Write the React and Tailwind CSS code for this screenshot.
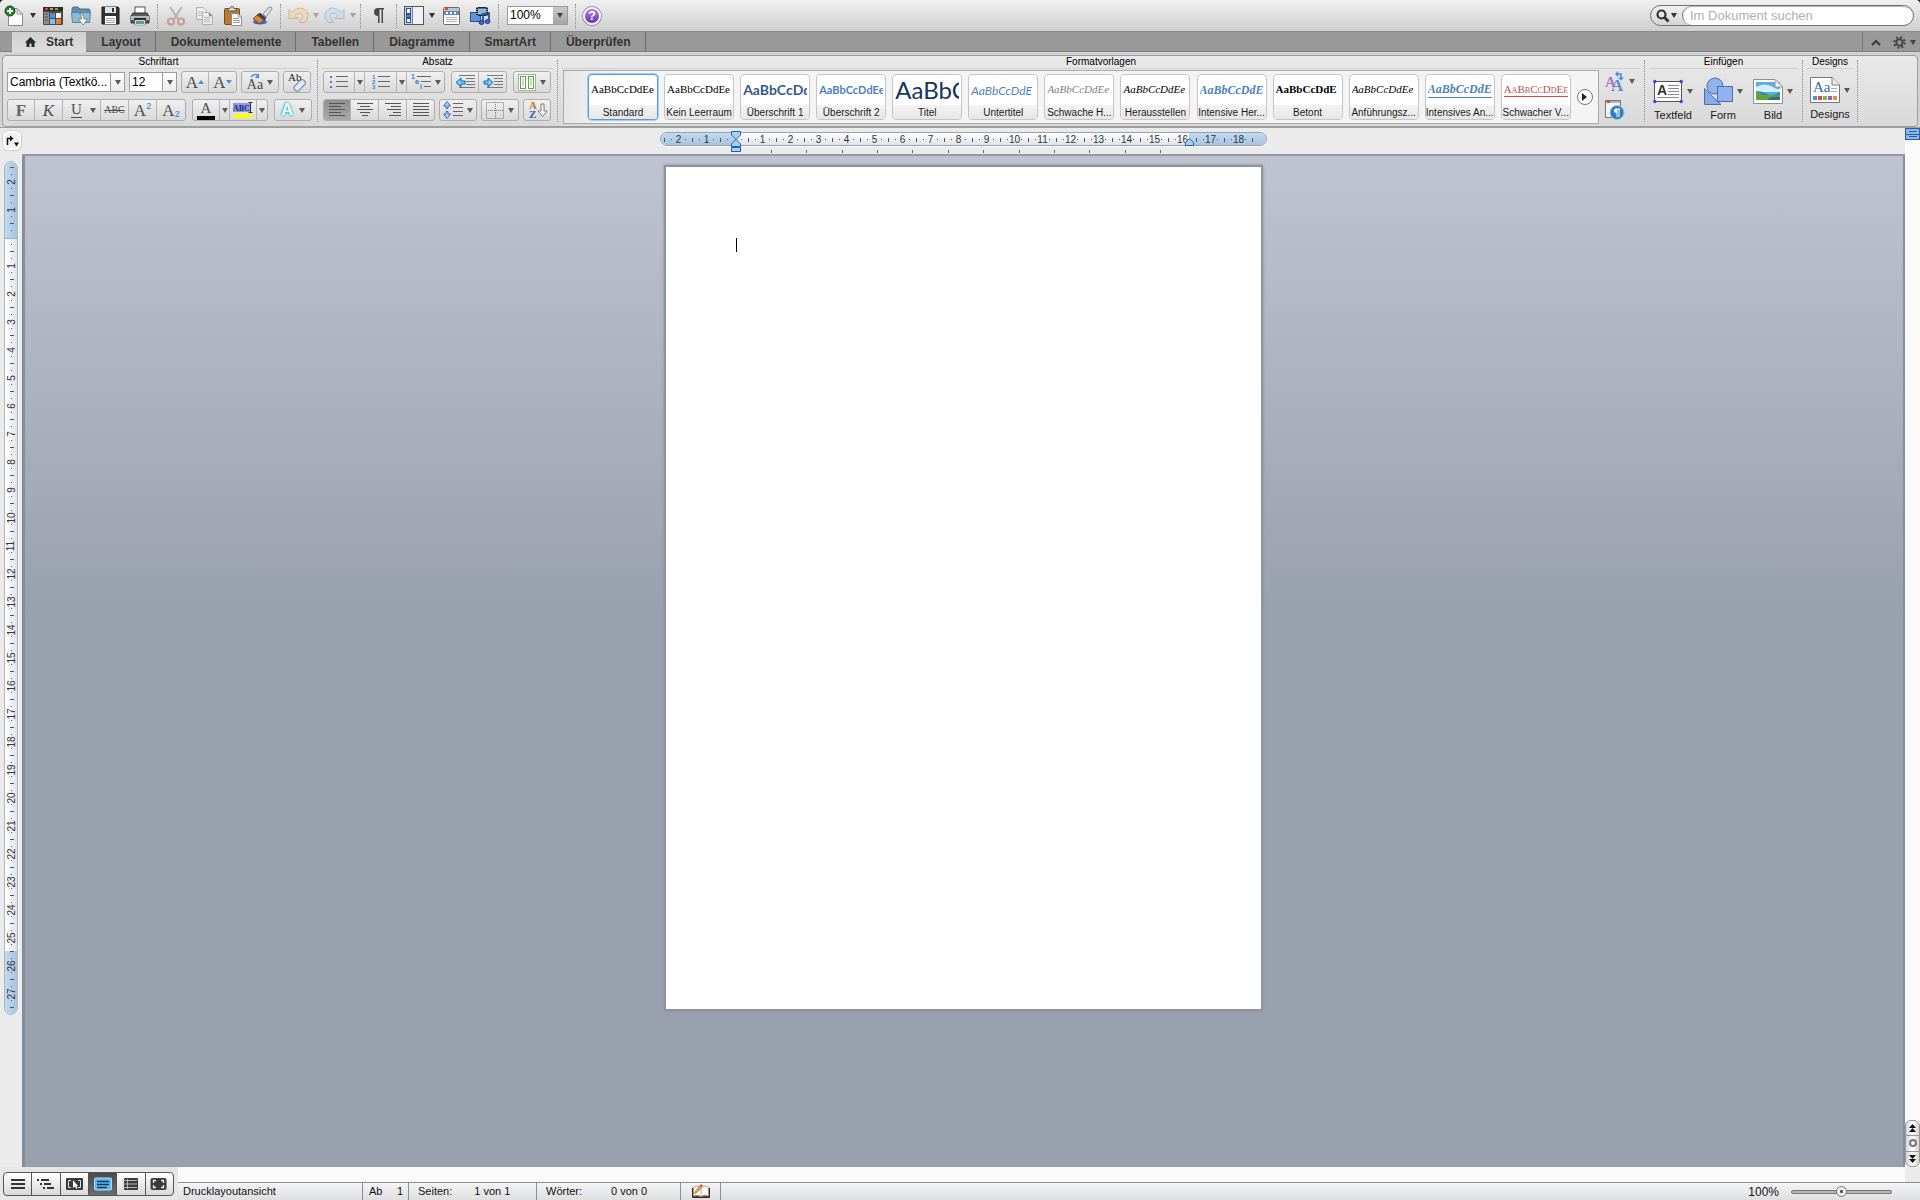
import { useState } from "react"

const styles = [
    { name: "Standard", sample: "AaBbCcDdEe", look: "font-['Liberation_Serif',serif] text-[11px] text-black" },
    { name: "Kein Leerraum", sample: "AaBbCcDdEe", look: "font-['Liberation_Serif',serif] text-[11px] text-black" },
    { name: "Überschrift 1", sample: "AaBbCcDd", look: "font-[Lato,sans-serif] font-bold text-[14px] text-[#345a8a]" },
    { name: "Überschrift 2", sample: "AaBbCcDdEe", look: "font-[Lato,sans-serif] font-bold text-[11px] text-[#4f81bd]" },
    { name: "Titel", sample: "AaBbC", look: "font-[Lato,sans-serif] text-[24px] text-[#17365d]" },
    { name: "Untertitel", sample: "AaBbCcDdE", look: "font-[Lato,sans-serif] italic text-[12px] text-[#4f81bd]" },
    { name: "Schwache H...", sample: "AaBbCcDdEe", look: "font-['Liberation_Serif',serif] italic text-[11px] text-[#808080]" },
    { name: "Herausstellen", sample: "AaBbCcDdEe", look: "font-['Liberation_Serif',serif] italic text-[11px] text-black" },
    { name: "Intensive Her...", sample: "AaBbCcDdE", look: "font-['Liberation_Serif',serif] italic font-bold text-[12px] text-[#4f81bd]" },
    { name: "Betont", sample: "AaBbCcDdE", look: "font-['Liberation_Serif',serif] font-bold text-[11px] text-black" },
    { name: "Anführungsz...", sample: "AaBbCcDdEe", look: "font-['Liberation_Serif',serif] italic text-[11px] text-black" },
    { name: "Intensives An...", sample: "AaBbCcDdE", look: "font-['Liberation_Serif',serif] italic font-bold text-[12px] text-[#4f81bd] border-b border-[#4f81bd]" },
    { name: "Schwacher V...", sample: "AaBbCcDdEe", look: "font-['Liberation_Serif',serif] [font-variant:small-caps] text-[11px] text-[#c0504d] border-b border-[#c0504d]" },
]

const tabs = ["Layout", "Dokumentelemente", "Tabellen", "Diagramme", "SmartArt", "Überprüfen"]

const range = (from, to) => Array.from({ length: to - from + 1 }, (_, i) => from + i)

function Caret({ className = "text-[#5a5a5a]" }) {
    return (
        <svg className={`shrink-0 ${className}`} width="6" height="5" viewBox="0 0 6 5">
            <path d="M0 0H6L3 5Z" fill="currentColor" />
        </svg>
    )
}

function Tool({ label, className = "w-[29px]", children }) {
    return (
        <button aria-label={label} title={label} className={`flex h-full shrink-0 items-center justify-center ${className}`}>
            {children}
        </button>
    )
}

function ToolSeparator() {
    return (
        <div className="flex h-6 w-[7px] shrink-0 justify-center">
            <div className="border-l border-dotted border-[#8c8c8c]" />
        </div>
    )
}

/* ---------- standard toolbar icons ---------- */

function NewIcon() {
    return (
        <svg width="20" height="22" viewBox="0 0 20 22">
            <path d="M4.500 3.500H13L18.500 9V20.500H4.500Z" fill="#fff" stroke="#8a8a8a" />
            <path d="M13 3.500V9H18.500Z" fill="#e4e4e4" stroke="#9a9a9a" />
            <circle cx="6" cy="6" r="5" fill="#2c7a2c" stroke="#175217" />
            <path d="M6 3V9M3 6H9" stroke="#fff" strokeWidth="2" />
        </svg>
    )
}

function GalleryIcon() {
    return (
        <svg width="20" height="20" viewBox="0 0 20 20">
            <rect x="0" y="1" width="20" height="18" rx="1" fill="#4a4a4a" />
            <rect x="0" y="1" width="20" height="4" fill="#2e2e2e" />
            <rect x="2" y="2" width="3" height="2" fill="#e0432e" />
            <rect x="7" y="2" width="3" height="2" fill="#f08c2a" />
            <rect x="12" y="2" width="3" height="2" fill="#58b848" />
            <rect x="1" y="6" width="5" height="12" fill="#8d8d8d" />
            <path d="M2 8H5M2 11H5M2 14H5" stroke="#555" />
            <rect x="7" y="7" width="5" height="5" fill="#4f8fe0" />
            <rect x="13" y="7" width="5" height="5" fill="#f5f5f5" />
            <rect x="7" y="13" width="5" height="5" fill="#7cc1f2" />
            <rect x="13" y="13" width="5" height="5" fill="#ef7b2b" />
        </svg>
    )
}

function OpenIcon() {
    return (
        <svg width="21" height="20" viewBox="0 0 21 20">
            <path d="M1 3Q1 1 3 1H7L9 3H18Q19 3 19 5V7H1Z" fill="#5d8fae" stroke="#48708b" />
            <path d="M0.500 6.500H19.500L18.500 16.500H1.500Z" fill="#8bb9d6" stroke="#5586a4" />
            <path d="M8 7Q13 8 13 13H16.500L12 19L7.500 13H10.500Q11 9 8 7Z" fill="#fff" stroke="#777" strokeWidth="0.800" />
        </svg>
    )
}

function SaveIcon() {
    return (
        <svg width="19" height="19" viewBox="0 0 19 19">
            <path d="M1 1H17L18 2V18H1Z" fill="#2f3338" stroke="#1b1b1b" />
            <rect x="4" y="1" width="11" height="6" fill="#dfe5ea" />
            <rect x="11" y="2" width="2" height="4" fill="#2f3338" />
            <rect x="4" y="10" width="11" height="8" fill="#fff" />
            <path d="M5 12.500H14M5 14.500H14M5 16.500H14" stroke="#a5a5a5" />
        </svg>
    )
}

function PrintIcon() {
    return (
        <svg width="20" height="20" viewBox="0 0 20 20">
            <rect x="5" y="1" width="10" height="7" fill="#fff" stroke="#555" />
            <path d="M3 7H17L19 10V17H1V10Z" fill="#5b5b5b" stroke="#333" />
            <rect x="1" y="10" width="18" height="4" fill="#b9b9b9" />
            <rect x="4" y="12" width="12" height="2" fill="#222" />
            <rect x="5" y="14" width="10" height="5" fill="#fff" stroke="#777" strokeWidth="0.600" />
            <rect x="6" y="15" width="8" height="3" fill="#4a93d9" />
            <path d="M8 18L11 15.500L14 18Z" fill="#67ad4a" />
        </svg>
    )
}

function CutIcon() {
    return (
        <svg width="20" height="20" viewBox="0 0 20 20" fill="none" opacity="0.550">
            <path d="M4 1L12 13M16 1L8 13" stroke="#8c8c8c" strokeWidth="2" />
            <circle cx="5" cy="15.500" r="3" stroke="#c8685c" strokeWidth="2" />
            <circle cx="15" cy="15.500" r="3" stroke="#c8685c" strokeWidth="2" />
        </svg>
    )
}

function CopyIcon() {
    return (
        <svg width="19" height="20" viewBox="0 0 19 20" opacity="0.550">
            <path d="M1.500 1.500H8L11.500 5V13.500H1.500Z" fill="#f5f5f5" stroke="#8d8d8d" />
            <path d="M3 5.500H8M3 7.500H9M3 9.500H9" stroke="#a5a5a5" />
            <path d="M7.500 6.500H14L17.500 10V18.500H7.500Z" fill="#f8f8f8" stroke="#8d8d8d" />
            <path d="M14 6.500V10H17.500M9 11.500H15M9 13.500H15M9 15.500H15" stroke="#9b9b9b" />
        </svg>
    )
}

function PasteIcon() {
    return (
        <svg width="19" height="20" viewBox="0 0 19 20">
            <rect x="0.500" y="2.500" width="15" height="16" rx="1" fill="#b97a2e" stroke="#7b4b16" />
            <path d="M4 5V2.500H6Q6 0.500 8 0.500T10 2.500H12V5Z" fill="#d7d7d7" stroke="#5c5c5c" />
            <path d="M7.500 7.500H14L17.500 11V19.500H7.500Z" fill="#fff" stroke="#8a8a8a" />
            <path d="M14 7.500V11H17.500M9 12.500H15M9 14.500H16M9 16.500H16" fill="none" stroke="#9a9a9a" />
        </svg>
    )
}

function BrushIcon() {
    return (
        <svg width="21" height="20" viewBox="0 0 21 20">
            <ellipse cx="8" cy="16" rx="7" ry="2.500" fill="#3e62d8" />
            <path d="M11 8L17 1Q20 0 20 3L14 11Z" fill="#d9dde2" stroke="#8c9299" />
            <path d="M8 7L14 12L12 15L5 9Z" fill="#39445a" stroke="#262c3b" strokeWidth="0.600" />
            <path d="M5 9L12 14L8 18L1 13Z" fill="#c9792c" stroke="#7b4111" strokeWidth="0.800" />
            <path d="M3 12L8 16M5 10.500L10 15" stroke="#f2b463" strokeWidth="0.800" />
        </svg>
    )
}

function UndoIcon({ redo }) {
    return (
        <svg width="21" height="17" viewBox="0 0 21 17" className={redo ? "-scale-x-100" : ""} opacity="0.600">
            <path
                d="M1 2.500V11.500H10L7 8.500Q10 5 13.500 6.500Q16.500 9 12 13.500V15.500H17Q20.500 12 20 7.500Q18.500 1.500 12.500 1Q7.500 1 4 5.500Z"
                fill={redo ? "#c2dceb" : "#f3d6a6"}
                stroke={redo ? "#7fa7c0" : "#c9974e"}
            />
        </svg>
    )
}

function SidebarIcon() {
    return (
        <svg width="20" height="20" viewBox="0 0 20 20">
            <rect x="0.500" y="0.500" width="19" height="18" fill="#eef0f6" stroke="#555" />
            <rect x="1" y="1" width="7" height="17" fill="#c5d3ee" />
            <rect x="2.500" y="2.500" width="4" height="5" fill="#fff" stroke="#2d4f9f" />
            <rect x="2.500" y="8.500" width="4" height="3" fill="#5a7fce" stroke="#2d4f9f" />
            <rect x="2.500" y="12.500" width="4" height="4" fill="#fff" stroke="#2d4f9f" />
            <path d="M8.500 1V18" stroke="#7486ad" />
        </svg>
    )
}

function ToolboxIcon() {
    return (
        <svg width="17" height="20" viewBox="0 0 17 20">
            <rect x="0.500" y="1.500" width="16" height="17" rx="1" fill="#fafafa" stroke="#6b6b6b" />
            <rect x="1" y="2" width="15" height="3" fill="#c5c5c5" />
            <rect x="2" y="1" width="3" height="3" fill="#d8442c" />
            <rect x="1" y="5" width="15" height="4" fill="#5e8bb5" />
            <path d="M3 7H5M7 7H9M11 7H13" stroke="#fff" strokeWidth="2" />
            <path d="M3 11.500H14M3 13.500H14M3 15.500H14" stroke="#b5b5b5" />
        </svg>
    )
}

function MediaIcon() {
    return (
        <svg width="21" height="20" viewBox="0 0 21 20">
            <rect x="0.500" y="6.500" width="10" height="9" fill="#5f94dc" stroke="#2c4f8d" />
            <rect x="6" y="1" width="12" height="9" fill="#232323" />
            <rect x="8" y="2.500" width="8" height="6" fill="#84b9e8" />
            <path d="M7 1V10M17 1V10" stroke="#f2f2f2" strokeDasharray="1 1" />
            <path d="M13 16V8L19 7V15" stroke="#2b4e9e" strokeWidth="1.800" fill="none" />
            <ellipse cx="11.500" cy="16.500" rx="2.500" ry="2" fill="#3f6dc4" stroke="#213f84" />
            <ellipse cx="17.500" cy="15.500" rx="2.500" ry="2" fill="#3f6dc4" stroke="#213f84" />
        </svg>
    )
}

function Toolbar() {
    const [zoom, setZoom] = useState("100%")

    return (
        <div className="bg-black">
            <div className="flex h-8 items-center rounded-t-[4px] border-b border-[#8a8a8a] bg-linear-to-b from-[#f0f0f0] to-[#cfcfcf] pr-1.5">
                <Tool label="Neues Dokument" className="w-7"><NewIcon /></Tool>
                <Tool label="Neu, weitere Optionen" className="w-[10px]"><Caret className="text-[#333]" /></Tool>
                <Tool label="Vorlagenkatalog"><GalleryIcon /></Tool>
                <Tool label="Öffnen"><OpenIcon /></Tool>
                <Tool label="Speichern"><SaveIcon /></Tool>
                <Tool label="Drucken"><PrintIcon /></Tool>
                <ToolSeparator />
                <Tool label="Ausschneiden"><CutIcon /></Tool>
                <Tool label="Kopieren"><CopyIcon /></Tool>
                <Tool label="Einsetzen"><PasteIcon /></Tool>
                <Tool label="Format übertragen"><BrushIcon /></Tool>
                <ToolSeparator />
                <Tool label="Rückgängig" className="w-7"><UndoIcon /></Tool>
                <Tool label="Rückgängig, Liste" className="w-2"><Caret className="text-[#a5a5a5]" /></Tool>
                <Tool label="Wiederholen"><UndoIcon redo /></Tool>
                <Tool label="Wiederholen, Liste" className="w-2"><Caret className="text-[#a5a5a5]" /></Tool>
                <ToolSeparator />
                <Tool label="Formatierungszeichen">
                    <svg width="12" height="16" viewBox="0 0 12 16">
                        <path d="M5 0H11V1.500H10V15H8.500V1.500H6.500V15H5V8Q1 8 1 4T5 0Z" fill="#4a4a4a" />
                    </svg>
                </Tool>
                <ToolSeparator />
                <Tool label="Seitenleiste" className="w-7"><SidebarIcon /></Tool>
                <Tool label="Seitenleiste, Optionen" className="w-2"><Caret className="text-[#333]" /></Tool>
                <Tool label="Toolbox" className="w-[30px]"><ToolboxIcon /></Tool>
                <Tool label="Medienbrowser"><MediaIcon /></Tool>
                <ToolSeparator />
                <div className="relative mr-1 ml-[5px] h-[19px] w-[61px] border border-[#9a9a9a] bg-white">
                    <select
                        aria-label="Zoom"
                        className="block h-full w-full appearance-none pl-0.5 text-[12px] leading-[17px] text-black outline-none"
                        value={zoom}
                        onChange={({ target }) => setZoom(target.value)}
                    >
                        <option>100%</option>
                        <option>150%</option>
                        <option>200%</option>
                    </select>
                    <div className="pointer-events-none absolute inset-y-0 right-0 flex w-[14px] items-center justify-center bg-linear-to-b from-[#c9c9c9] to-[#a5a5a5]">
                        <Caret className="text-[#444]" />
                    </div>
                </div>
                <ToolSeparator />
                <Tool label="Hilfe" className="w-[26px]">
                    <span className="flex size-[18px] items-center justify-center rounded-full border-2 border-[#f4f0fa] bg-linear-to-b from-[#a582dd] to-[#6a2fb8] text-[13px] leading-none font-bold text-white shadow-[0_0_0_1px_#8d8d8d]">?</span>
                </Tool>

                <div className="ml-auto flex h-[21px] w-[264px] overflow-hidden rounded-full border border-[#6e6e6e] bg-linear-to-b from-[#f0f0f0] to-[#d5d5d5]">
                    <button aria-label="Suchoptionen" className="flex w-[31px] items-center justify-center gap-px">
                        <svg width="14" height="14" viewBox="0 0 14 14" fill="none" stroke="#333">
                            <circle cx="5.500" cy="5.500" r="4" strokeWidth="2.200" />
                            <path d="M8.500 8.500L12.500 12.500" strokeWidth="2.800" />
                        </svg>
                        <Caret className="text-[#333]" />
                    </button>
                    <input
                        aria-label="Im Dokument suchen"
                        placeholder="Im Dokument suchen"
                        className="min-w-0 flex-1 rounded-full border-l border-[#7d7d7d] bg-white pl-[7px] text-[13px] shadow-[inset_0_1px_1px_#b5b5b5] outline-none placeholder:text-[#b0b0b0]"
                    />
                </div>
            </div>
        </div>
    )
}

function TabBar() {
    return (
        <nav className="flex h-5 items-stretch bg-[#999] text-[12px] font-bold text-[#333] shadow-[inset_0_-1px_0_#808080]">
            <button className="ml-3 flex items-center gap-2.5 bg-linear-to-b from-[#cfcfcf] to-[#dedede] px-[13px] text-[#333]">
                <svg width="11" height="10" viewBox="0 0 11 10">
                    <path d="M5.500 0L11 5.500H9.500V10H6.500V6.500H4.500V10H1.500V5.500H0L5.500 0Z" fill="#2a2a2a" />
                </svg>
                Start
            </button>
            {tabs.map((tab) => (
                <button key={tab} className="border-r border-[#6e6e6e] pr-3.5 pl-[15px] shadow-[inset_0_-1px_0_#808080]">{tab}</button>
            ))}
            <div className="ml-auto flex items-center border-l border-[#777]">
                <button aria-label="Menüband ausblenden" className="flex w-[26px] justify-center">
                    <svg width="10" height="7" viewBox="0 0 10 7" fill="none" stroke="#3a3a3a" strokeWidth="2">
                        <path d="M1 6L5 2L9 6" />
                    </svg>
                </button>
                <button aria-label="Einstellungen" className="flex items-center gap-1 pr-1 pl-1">
                    <svg width="13" height="13" viewBox="0 0 13 13" fill="none" stroke="#444">
                        <circle cx="6.500" cy="6.500" r="3.200" strokeWidth="2" />
                        <circle cx="6.500" cy="6.500" r="5.300" strokeWidth="2" strokeDasharray="2 2.160" />
                    </svg>
                    <Caret className="text-[#444]" />
                </button>
            </div>
        </nav>
    )
}

/* ---------- ribbon ---------- */

function Group({ title, className = "", children }) {
    return (
        <section className={`flex flex-col ${className}`}>
            <h2 className="mx-1 h-[13px] border-b border-[#d0d0d0] text-center text-[10px] leading-3 text-black">{title}</h2>
            {children}
        </section>
    )
}

function GroupSeparator() {
    return <div className="my-1 border-l border-dotted border-[#8c8c8c]" />
}

function Buttons({ children }) {
    return (
        <div className="flex h-[22px] divide-x divide-[#b5b5b5] overflow-hidden rounded-[3px] border border-[#adadad] bg-linear-to-b from-[#f0f0f0] to-[#d9d9d9]">
            {children}
        </div>
    )
}

function Btn({ label, className = "w-7", children }) {
    return (
        <button aria-label={label} title={label} className={`flex items-center justify-center text-[#4d4d4d] ${className}`}>
            {children}
        </button>
    )
}

function ComboBox({ label, options, className }) {
    const [value, setValue] = useState(options[0])

    return (
        <div className={`relative h-5 border border-[#9d9d9d] bg-white ${className}`}>
            <select
                aria-label={label}
                className="block h-full w-full appearance-none pr-3.5 pl-0.5 text-[12px] leading-[18px] text-black outline-none"
                value={value}
                onChange={({ target }) => setValue(target.value)}
            >
                {options.map((o) => <option key={o}>{o}</option>)}
            </select>
            <div className="pointer-events-none absolute inset-y-0 right-0 flex w-[14px] items-center justify-center border-l border-[#9d9d9d] bg-linear-to-b from-white to-[#ececec]">
                <Caret />
            </div>
        </div>
    )
}

const glyph = "font-['Liberation_Serif',serif] leading-none"

function FontGroup() {
    return (
        <Group title="Schriftart" className="w-[309px]">
            <div className="flex flex-col gap-1.5 pt-0.5 pl-[3px]">
                <div className="flex h-[22px] items-center gap-1">
                    <ComboBox label="Schriftart" options={["Cambria (Textkö...", "Calibri", "Arial"]} className="w-[118px]" />
                    <ComboBox label="Schriftgrad" options={["12", "14", "18"]} className="w-12" />
                    <Buttons>
                        <Btn label="Schrift vergrößern" className="w-[27px]">
                            <span className={`${glyph} text-[17px]`}>A</span>
                            <svg width="6" height="4" viewBox="0 0 6 4"><path d="M0 4H6L3 0Z" fill="#4a90d9" /></svg>
                        </Btn>
                        <Btn label="Schrift verkleinern" className="w-[27px]">
                            <span className={`${glyph} text-[17px]`}>A</span>
                            <svg width="6" height="4" viewBox="0 0 6 4"><path d="M0 0H6L3 4Z" fill="#4a90d9" /></svg>
                        </Btn>
                    </Buttons>
                    <Buttons>
                        <Btn label="Groß-/Kleinschreibung" className="w-9 gap-1">
                            <span className="flex flex-col items-center">
                                <svg width="10" height="5" viewBox="0 0 10 5" fill="none">
                                    <path d="M1 4Q4 0 8 2.500" stroke="#4a90d9" strokeWidth="1.500" />
                                    <path d="M9 0V5H5Z" fill="#4a90d9" />
                                </svg>
                                <span className={`${glyph} text-[14px]`}>Aa</span>
                            </span>
                            <Caret />
                        </Btn>
                    </Buttons>
                    <Buttons>
                        <Btn label="Formatierung löschen" className="w-[26px]">
                            <svg width="20" height="20" viewBox="0 0 20 20">
                                <text x="1" y="9" fontSize="11" fontFamily="Liberation Serif" fill="#222">Ab</text>
                                <rect x="-7" y="-3" width="13" height="6" rx="2.500" transform="translate(13 13) rotate(-45)" fill="#e4ebfa" stroke="#6a7da8" />
                            </svg>
                        </Btn>
                    </Buttons>
                </div>
                <div className="flex gap-1.5">
                    <Buttons>
                        <Btn label="Fett" className="w-[27px]"><span className={`${glyph} text-[17px] font-bold text-[#666]`}>F</span></Btn>
                        <Btn label="Kursiv"><span className={`${glyph} text-[17px] italic`}>K</span></Btn>
                        <Btn label="Unterstrichen" className="w-[38px] gap-2 pl-1">
                            <span className={`${glyph} border-b border-[#4d4d4d] text-[15px]`}>U</span>
                            <Caret />
                        </Btn>
                        <Btn label="Durchgestrichen"><span className={`${glyph} text-[10px] line-through`}>ABC</span></Btn>
                        <Btn label="Hochgestellt">
                            <span className={`${glyph} text-[17px]`}>A</span>
                            <span className="mb-2 text-[9px] leading-none text-[#2f7fd0]">2</span>
                        </Btn>
                        <Btn label="Tiefgestellt">
                            <span className={`${glyph} text-[17px]`}>A</span>
                            <span className="mt-2 text-[9px] leading-none text-[#2f7fd0]">2</span>
                        </Btn>
                    </Buttons>
                    <Buttons>
                        <Btn label="Schriftfarbe" className="w-[27px]">
                            <span className={`${glyph} w-[18px] border-b-4 border-black text-[15px]`}>A</span>
                        </Btn>
                        <Btn label="Schriftfarbe wählen" className="w-[10px]"><Caret /></Btn>
                        <Btn label="Hervorheben" className="w-[27px]">
                            <svg width="20" height="18" viewBox="0 0 20 18">
                                <rect x="0" y="2" width="18" height="9" fill="#8c9ae8" />
                                <text x="0" y="10" fontSize="8" fontWeight="bold" fontFamily="Liberation Serif" fill="#1e2a6a">ABC</text>
                                <path d="M15.500 1.500H19.500M17.500 2V12M15.500 11.500H19.500" stroke="#333" />
                                <rect x="1" y="13" width="18" height="4" fill="#ff0" />
                            </svg>
                        </Btn>
                        <Btn label="Hervorhebungsfarbe" className="w-[10px]"><Caret /></Btn>
                    </Buttons>
                    <Buttons>
                        <Btn label="Texteffekte" className="w-9 gap-1.5">
                            <span className="text-[16px] leading-none font-bold text-white [text-shadow:0_0_2px_#19c5d8,0_0_2px_#19c5d8,0_0_3px_#19c5d8]">A</span>
                            <Caret />
                        </Btn>
                    </Buttons>
                </div>
            </div>
        </Group>
    )
}

function AlignIcon({ d }) {
    return (
        <svg width="16" height="14" viewBox="0 0 16 14" stroke="#555">
            <path d={d} />
        </svg>
    )
}

function IndentIcon({ right }) {
    return (
        <svg width="20" height="15" viewBox="0 0 20 15">
            <path d="M4 0.500H20M11 3.500H20M11 6.500H20M11 9.500H20M4 12.500H20" stroke="#777" />
            <path
                d={right ? "M1 6H5V3L10 7.500L5 12V9H1Z" : "M10 6H6V3L1 7.500L6 12V9H10Z"}
                fill="#6fd0f5"
                stroke="#1765a8"
            />
        </svg>
    )
}

function ParagraphGroup() {
    return (
        <Group title="Absatz" className="w-[239px]">
            <div className="flex flex-col gap-1.5 pt-0.5 pl-[5px]">
                <div className="flex gap-1.5">
                    <Buttons>
                        <Btn label="Aufzählung" className="w-[31px]">
                            <svg width="18" height="14" viewBox="0 0 18 14">
                                <path d="M0 2H2M0 7H2M0 12H2" stroke="#3b7fd0" strokeWidth="2" />
                                <path d="M6 1.500H18M6 6.500H18M6 11.500H18" stroke="#666" />
                            </svg>
                        </Btn>
                        <Btn label="Aufzählungszeichen" className="w-[10px]"><Caret /></Btn>
                        <Btn label="Nummerierung" className="w-8">
                            <svg width="18" height="16" viewBox="0 0 18 16">
                                <g fontSize="6" fontWeight="bold" fontFamily="Liberation Sans" fill="#3b7fd0">
                                    <text x="0" y="5">1</text>
                                    <text x="0" y="10">2</text>
                                    <text x="0" y="15">3</text>
                                </g>
                                <path d="M6 2.500H18M6 7.500H18M6 12.500H18" stroke="#666" />
                            </svg>
                        </Btn>
                        <Btn label="Nummerierungsart" className="w-[10px]"><Caret /></Btn>
                        <Btn label="Liste mit mehreren Ebenen" className="w-[37px] gap-1">
                            <svg width="20" height="16" viewBox="0 0 20 16">
                                <g fontSize="7" fontWeight="bold" fontFamily="Liberation Sans" fill="#3b7fd0">
                                    <text x="0" y="5">1</text>
                                    <text x="4" y="10">a</text>
                                    <text x="9" y="15">i</text>
                                </g>
                                <path d="M6 2.500H20M10 7.500H20M13 12.500H20" stroke="#666" />
                            </svg>
                            <Caret />
                        </Btn>
                    </Buttons>
                    <Buttons>
                        <Btn label="Einzug verkleinern" className="w-[27px]"><IndentIcon /></Btn>
                        <Btn label="Einzug vergrößern" className="w-[27px]"><IndentIcon right /></Btn>
                    </Buttons>
                    <Buttons>
                        <Btn label="Spalten" className="w-9 gap-1">
                            <svg width="18" height="17" viewBox="0 0 18 17" fill="#fff">
                                <rect x="0.500" y="0.500" width="17" height="16" stroke="#aaa" />
                                <rect x="2.500" y="2.500" width="5" height="12" stroke="#58a83a" />
                                <rect x="10.500" y="2.500" width="5" height="12" stroke="#58a83a" />
                                <path d="M4 5H6M4 7H6M4 9H6M4 11H6M12 5H14M12 7H14M12 9H14M12 11H14" stroke="#aaa" />
                            </svg>
                            <Caret />
                        </Btn>
                    </Buttons>
                </div>
                <div className="flex gap-1">
                    <Buttons>
                        <Btn label="Linksbündig" className="w-[27px] bg-linear-to-b from-[#8f8f8f] to-[#a8a8a8]">
                            <AlignIcon d="M0 0.500H16M0 3.500H12M0 6.500H16M0 9.500H12M0 12.500H16" />
                        </Btn>
                        <Btn label="Zentriert"><AlignIcon d="M0 0.500H16M3 3.500H13M0 6.500H16M3 9.500H13M5 12.500H11" /></Btn>
                        <Btn label="Rechtsbündig"><AlignIcon d="M0 0.500H16M6 3.500H16M2 6.500H16M8 9.500H16M4 12.500H16" /></Btn>
                        <Btn label="Blocksatz" className="w-[27px]"><AlignIcon d="M0 0.500H16M0 3.500H16M0 6.500H16M0 9.500H16M0 12.500H16" /></Btn>
                    </Buttons>
                    <Buttons>
                        <Btn label="Zeilenabstand" className="w-9 gap-1">
                            <svg width="20" height="18" viewBox="0 0 20 18">
                                <path d="M4 0.500L7.500 5H5V7.500H3V5H0.500ZM4 17.500L7.500 13H5V10.500H3V13H0.500Z" fill="#a9cdf2" stroke="#2b62b5" strokeWidth="0.900" />
                                <path d="M10 2.500H20M10 6.500H20M10 10.500H20M10 14.500H20" stroke="#666" />
                            </svg>
                            <Caret />
                        </Btn>
                    </Buttons>
                    <Buttons>
                        <Btn label="Rahmen" className="w-9 gap-1">
                            <svg width="18" height="17" viewBox="0 0 18 17" fill="none" stroke="#777" strokeDasharray="1 1">
                                <path d="M0.500 0.500H17.500V16.500H0.500ZM9.500 0V17M0 8.500H18" />
                            </svg>
                            <Caret />
                        </Btn>
                    </Buttons>
                    <Buttons>
                        <Btn label="Sortieren" className="w-[26px]">
                            <svg width="21" height="20" viewBox="0 0 21 20">
                                <g fontSize="11" fontWeight="bold" fontFamily="Liberation Serif">
                                    <text x="2" y="9" fill="#c9780f">A</text>
                                    <text x="2" y="18" fill="#2f62b8">Z</text>
                                </g>
                                <path d="M14 4H17V11H20L15.500 16.500L11 11H14Z" fill="#fff" stroke="#777" />
                            </svg>
                        </Btn>
                    </Buttons>
                </div>
            </div>
        </Group>
    )
}

function StylesGroup() {
    const [selected, setSelected] = useState("Standard")

    return (
        <Group title="Formatvorlagen" className="min-w-0 flex-1">
            <div className="flex gap-1.5 pr-[7px] pl-[5px]">
                <div className="mt-px flex h-[54px] min-w-0 flex-1 items-center justify-between border border-[#a9a9a9] bg-linear-to-r from-[#e6e6e6] via-[#f4f4f4] via-5% to-[#f4f4f4] pr-[5px] pl-6">
                    {styles.map(({ name, sample, look }) => (
                        <button
                            key={name}
                            onClick={() => setSelected(name)}
                            className={`flex h-[46px] w-[70px] flex-col rounded-[4px] border bg-white ${selected === name ? "border-[#5a9bd5] ring-1 ring-[#a5cdf0]" : "border-[#c5c5c5]"}`}
                        >
                            <span className="flex h-[30px] w-full items-center overflow-hidden px-0.5">
                                <span className={`w-full overflow-hidden text-left leading-[1.25] whitespace-nowrap ${look}`}>{sample}</span>
                            </span>
                            <span className="flex h-[14px] w-full justify-center rounded-b-[3px] bg-linear-to-b from-[#f4f4f4] to-[#e6e6e6] text-[10px] leading-[15px] whitespace-nowrap text-[#1a1a1a]">{name}</span>
                        </button>
                    ))}
                    <button aria-label="Weitere Formatvorlagen" className="flex size-4 items-center justify-center rounded-full border border-[#777] bg-white">
                        <svg width="5" height="8" viewBox="0 0 5 8"><path d="M0 0V8L5 4Z" fill="#222" /></svg>
                    </button>
                </div>
                <div className="flex w-8 flex-col gap-2 pt-0.5">
                    <button aria-label="Formatvorlage ändern" className="flex items-center gap-1">
                        <svg width="20" height="21" viewBox="0 0 20 21">
                            <g fontFamily="Liberation Serif" fontWeight="bold">
                                <text x="0" y="16" fontSize="15" fill="#a678c9">A</text>
                                <text x="6" y="20" fontSize="17" fill="#5f8fc4">A</text>
                            </g>
                            <path d="M11 3H16V7" fill="none" stroke="#3a8edb" strokeWidth="1.500" />
                            <path d="M13 6.500H19L16 9.500ZM13 0V6L10 3Z" fill="#3a8edb" />
                        </svg>
                        <Caret />
                    </button>
                    <button aria-label="Formatvorlagen verwalten">
                        <svg width="20" height="20" viewBox="0 0 20 20">
                            <rect x="0.500" y="0.500" width="15" height="17" fill="#f6f6f6" stroke="#777" />
                            <rect x="1" y="1" width="14" height="2" fill="#b5b5b5" />
                            <rect x="2" y="1" width="3" height="2" fill="#e0432e" />
                            <circle cx="12" cy="12.500" r="7" fill="#2d80c4" stroke="#9cc4e2" />
                            <path d="M11 8.500H15V9.500H14.500V17H13.500V9.500H12.500V17H11.500V13Q9 13 9 10.700T11 8.500Z" fill="#fff" />
                        </svg>
                    </button>
                </div>
            </div>
        </Group>
    )
}

function BigButton({ label, children }) {
    return (
        <button className="flex w-[50px] flex-col items-center gap-0.5 text-[11px] leading-3 text-[#1a1a1a]">
            <span className="flex h-8 items-center gap-1">
                {children}
                <Caret />
            </span>
            {label}
        </button>
    )
}

function InsertGroup() {
    return (
        <Group title="Einfügen" className="w-[157px]">
            <div className="flex pt-1.5 pl-[3px]">
                <BigButton label="Textfeld">
                    <svg width="30" height="25" viewBox="0 0 30 25">
                        <rect x="1.500" y="2.500" width="27" height="20" fill="#fff" stroke="#555" />
                        <text x="4" y="16" fontSize="14" fontWeight="bold" fontFamily="Liberation Sans" fill="#333">A</text>
                        <path d="M15 6.500H26M15 9.500H26M15 12.500H26M15 15.500H26M4 18.500H26" stroke="#8a8a8a" />
                        <g fill="#fff" stroke="#3a3af0" strokeWidth="1.500">
                            <circle cx="1.800" cy="2.500" r="1" />
                            <circle cx="28.200" cy="2.500" r="1" />
                            <circle cx="1.800" cy="22.500" r="1" />
                            <circle cx="28.200" cy="22.500" r="1" />
                        </g>
                    </svg>
                </BigButton>
                <BigButton label="Form">
                    <svg width="29" height="28" viewBox="0 0 29 28" stroke="#4a6fb0">
                        <circle cx="11" cy="9" r="8" fill="#92b4ea" />
                        <path d="M0.500 11.500V27.500H17Z" fill="#86abe6" />
                        <rect x="13.500" y="9.500" width="15" height="15" fill="#8fb3ee" />
                    </svg>
                </BigButton>
                <BigButton label="Bild">
                    <svg width="30" height="25" viewBox="0 0 30 25">
                        <path d="M0.500 0.500H22L29.500 8V24.500H0.500Z" fill="#fff" stroke="#8f8f8f" />
                        <rect x="3" y="3" width="24" height="18" fill="#5aaee6" />
                        <path d="M3 8Q12 3 20 8T27 7V13H3Z" fill="#d7effb" />
                        <path d="M3 12Q9 12 14 15T27 13V17H3Z" fill="#2c86b8" />
                        <path d="M3 12Q7 14 10 16L27 16V21H3Z" fill="#5fa53c" />
                        <path d="M14 21Q18 17 27 18V21Z" fill="#2f6f8f" />
                        <path d="M22 0.500V8H29.500Z" fill="#f2f2f2" stroke="#999" />
                    </svg>
                </BigButton>
            </div>
        </Group>
    )
}

function DesignsGroup() {
    return (
        <Group title="Designs" className="w-[54px]">
            <div className="flex justify-center pt-[5px]">
                <BigButton label="Designs">
                    <svg width="30" height="26" viewBox="0 0 30 26">
                        <path d="M0.500 0.500H22L29.500 8V25.500H0.500Z" fill="#fff" stroke="#777" />
                        <path d="M22 0.500V8H29.500" fill="#eee" stroke="#777" />
                        <text x="3" y="15" fontSize="15" fontFamily="Liberation Serif" fill="#3465b0">Aa</text>
                        <path d="M21 11.500H27M21 14.500H27" stroke="#aaa" />
                        <rect x="3" y="19" width="4" height="4" fill="#5b8ed0" />
                        <rect x="8" y="19" width="4" height="4" fill="#d14b4b" />
                        <rect x="13" y="19" width="4" height="4" fill="#7fb84a" />
                        <rect x="18" y="19" width="4" height="4" fill="#9a5bc4" />
                        <rect x="23" y="19" width="4" height="4" fill="#ec8f3c" />
                    </svg>
                </BigButton>
            </div>
        </Group>
    )
}

function Ribbon() {
    return (
        <div className="border-b border-[#a0a0a0] bg-[#d2d2d2] px-0.5 pt-[3px]">
            <div className="flex h-[72px] rounded-[4px] border border-[#9e9e9e] bg-linear-to-b from-[#e9e9e9] to-[#d9d9d9] pr-[59px] pl-px">
                <FontGroup />
                <div className="w-1" />
                <GroupSeparator />
                <ParagraphGroup />
                <GroupSeparator />
                <StylesGroup />
                <GroupSeparator />
                <InsertGroup />
                <GroupSeparator />
                <DesignsGroup />
                <GroupSeparator />
            </div>
        </div>
    )
}

/* ---------- rulers ---------- */

function RulerCell({ n, vertical }) {
    const box = vertical ? "h-[7px] w-full" : "h-full w-[7px]"
    const long = vertical ? "h-px w-1" : "h-1 w-px"

    return (
        <>
            <span className={`flex items-center justify-center ${box}`}><i className={`bg-[#555] ${long}`} /></span>
            <span className={`flex items-center justify-center ${box}`}><i className="size-px bg-[#555]" /></span>
            <span className={`flex items-center justify-center ${box}`}>
                {n !== 0 && <b className={`font-normal ${vertical ? "-rotate-90" : ""}`}>{Math.abs(n)}</b>}
            </span>
            <span className={`flex items-center justify-center ${box}`}><i className="size-px bg-[#555]" /></span>
        </>
    )
}

function HorizontalRuler() {
    return (
        <div className="relative flex w-[607px] flex-col">
            <div className="relative flex h-[14px] overflow-hidden rounded-full border border-[#8fa5bb] shadow-[0_1px_0_#fff]">
                <div className="absolute inset-0 flex">
                    <div className="w-[75px] bg-linear-to-b from-[#c3d9ee] to-[#a5c4e2]" />
                    <div className="flex-1 bg-linear-to-b from-white to-[#e0e4e8]" />
                    <div className="w-[77px] bg-linear-to-b from-[#c3d9ee] to-[#a5c4e2]" />
                </div>
                <div className="relative flex pt-px text-[10px] leading-3 text-[#333]">
                    {range(-2, 18).map((n) => <RulerCell key={n} n={n} />)}
                    <span className="flex w-[7px] items-center justify-center"><i className="h-1 w-px bg-[#555]" /></span>
                </div>
            </div>
            <div className="mt-1 ml-[111px] flex w-[390px] justify-between">
                {range(1, 12).map((n) => <i key={n} className="h-[3px] w-px bg-[#5d6b80]" />)}
            </div>
            <svg className="absolute top-[-1px] left-[71px]" width="10" height="22" viewBox="0 0 10 22" fill="#9fd4f8" stroke="#2a5fa8">
                <path d="M0.500 0.500H9.500V4L5 8.500L0.500 4Z" />
                <path d="M5 8.500L9.500 13V15.500H0.500V13Z" />
                <rect x="0.500" y="16.500" width="9" height="4" />
            </svg>
            <svg className="absolute top-[6px] left-[525px]" width="9" height="8" viewBox="0 0 9 8" fill="#9fd4f8" stroke="#2a5fa8">
                <path d="M4.500 0.700L8.500 4.500V7.500H0.500V4.500Z" />
            </svg>
        </div>
    )
}

function VerticalRuler() {
    return (
        <div className="relative mt-[7px] ml-1 flex h-[854px] w-[14px] flex-col overflow-hidden rounded-full border border-[#a9b6c4] shadow-[1px_0_0_#fff]">
            <div className="absolute inset-0 flex flex-col">
                <div className="h-[77px] border-b border-[#8fb0d0] bg-linear-to-r from-[#c3d9ee] to-[#a5c4e2]" />
                <div className="flex-1 bg-linear-to-r from-white to-[#e0e4e8]" />
                <div className="h-[63px] bg-linear-to-r from-[#c3d9ee] to-[#a5c4e2]" />
            </div>
            <div className="relative flex flex-col pt-0.5 pl-px text-[10px] leading-3 text-[#333]">
                {range(-2, 27).map((n) => <RulerCell key={n} n={n} vertical />)}
                <span className="flex h-[7px] items-center justify-center"><i className="h-px w-1 bg-[#555]" /></span>
            </div>
        </div>
    )
}

function ScrollBar() {
    return (
        <aside className="flex w-[15px] shrink-0 flex-col bg-[#fafafa]">
            <button aria-label="Fenster teilen" className="flex h-3 flex-col divide-y divide-[#2c5a9e] border border-[#2c5a9e] bg-[#8db8ea]">
                <span className="flex w-full flex-1 items-center justify-center"><i className="h-px w-2 bg-[#2c5a9e]" /></span>
                <span className="flex w-full flex-1 items-center justify-center"><i className="h-px w-2 bg-[#2c5a9e]" /></span>
            </button>
            <div className="mt-auto flex h-[47px] flex-col divide-y divide-[#999] rounded-[6px] border border-[#999] bg-linear-to-r from-[#d5d5d5] via-white to-[#d5d5d5]">
                <button aria-label="Vorherige Seite" className="flex flex-1 items-center justify-center">
                    <svg width="7" height="9" viewBox="0 0 7 9"><path d="M3.500 0L7 4H0ZM3.500 4L7 8H0Z" fill="#111" /></svg>
                </button>
                <button aria-label="Objekt auswählen" className="flex flex-1 items-center justify-center">
                    <span className="size-2 rounded-full border-2 border-[#777]" />
                </button>
                <button aria-label="Nächste Seite" className="flex flex-1 items-center justify-center">
                    <svg width="7" height="9" viewBox="0 0 7 9"><path d="M3.500 9L7 5H0ZM3.500 5L7 1H0Z" fill="#111" /></svg>
                </button>
            </div>
        </aside>
    )
}

/* ---------- status bar ---------- */

const views = [
    {
        name: "Entwurfsansicht",
        icon: <path d="M3 4H17M3 8H17M3 12H17" stroke="#333" strokeWidth="2" />,
    },
    {
        name: "Gliederungsansicht",
        icon: <path d="M1 4H3M5 4H13M4 8H6M8 8H15M7 12H9M11 12H18" stroke="#333" strokeWidth="2" />,
    },
    {
        name: "Publishing-Layoutansicht",
        icon: (
            <>
                <rect x="2" y="2" width="17" height="12" rx="1" fill="#3a3a3a" />
                <path d="M7 4.500H4.500V11.500H7M14 4.500H16.500V11.500H14" fill="none" stroke="#ddd" />
                <path d="M9 4V12L11 10.500L12.500 13L13.500 12L12.500 10H14Z" fill="#fff" />
            </>
        ),
    },
    {
        name: "Drucklayoutansicht",
        icon: (
            <>
                <rect x="1.500" y="2" width="17" height="12" rx="1" fill="#62b6f5" stroke="#a9dbff" />
                <path d="M4 5.500H16M4 8.500H16M4 11.500H14" stroke="#12385e" strokeWidth="1.400" />
            </>
        ),
    },
    {
        name: "Notizblocklayoutansicht",
        icon: (
            <>
                <rect x="3" y="2" width="14" height="12" rx="1" fill="#3a3a3a" />
                <path d="M1 4.500H16M1 8H16M1 11.500H16M6.500 3V13" stroke="#c5c5c5" strokeWidth="0.900" />
            </>
        ),
    },
    {
        name: "Vollbildansicht",
        icon: (
            <>
                <rect x="1.500" y="2" width="16" height="12" rx="2" fill="#3a3a3a" />
                <path d="M7 4.500H4.500V7M12 4.500H14.500V7M4.500 9V11.500H7M14.500 9V11.500H12" fill="none" stroke="#eee" strokeWidth="1.300" />
            </>
        ),
    },
]

function StatusBar() {
    const [view, setView] = useState("Drucklayoutansicht")
    const [zoom, setZoom] = useState(50)

    return (
        <footer className="flex h-[33px] text-[11px] text-[#111]">
            <div className="flex w-[178px] shrink-0 items-center bg-[#e6e6e6] pl-[3px]">
                <div className="flex h-6 w-[171px] divide-x divide-[#555] overflow-hidden rounded-[4px] border border-[#555] bg-linear-to-b from-white to-[#d8d8d8]">
                    {views.map(({ name, icon }) => (
                        <button
                            key={name}
                            aria-label={name}
                            onClick={() => setView(name)}
                            className={`flex flex-1 items-center justify-center ${view === name ? "bg-linear-to-b from-[#4a4a4a] to-[#6c6c6c]" : ""}`}
                        >
                            <svg width="20" height="16" viewBox="0 0 20 16">{icon}</svg>
                        </button>
                    ))}
                </div>
            </div>
            <div className="flex min-w-0 flex-1 flex-col">
                <div className="flex h-[15px]">
                    <div className="flex-1 bg-[#fafafa]" />
                    <div className="w-[15px] bg-[#ebebeb]" />
                </div>
                <div className="flex h-[18px] items-center divide-x divide-[#8f8f8f] border-t border-[#8f8f8f] bg-linear-to-b from-[#f4f4f4] to-[#dedfe1]">
                    <span className="flex h-full w-[185px] items-center pl-[5px]">{view}</span>
                    <span className="flex h-full w-[46px] items-center justify-between pr-[5px] pl-1.5">Ab <span>1</span></span>
                    <span className="flex h-full w-32 items-center gap-[22px] pl-[9px]">Seiten: <span>1 von 1</span></span>
                    <span className="flex h-full w-36 items-center gap-[29px] pl-[9px]">Wörter: <span>0 von 0</span></span>
                    <button aria-label="Rechtschreibprüfung" className="flex h-full w-10 items-center justify-center">
                        <svg width="18" height="15" viewBox="0 0 18 15">
                            <path d="M0.500 4V13.500H17.500V4" fill="#7a3a22" stroke="#4a2012" />
                            <path d="M1.500 3Q5 1 9 3.500Q13 1 16.500 3V12Q13 10.500 9 12.500Q5 10.500 1.500 12Z" fill="#fff" stroke="#8d8d8d" strokeWidth="0.700" />
                            <path d="M9 3.500V12.500" stroke="#aaa" />
                            <path d="M3 8L8 1.500L10 3L5 8.500L2.500 9.500Z" fill="#f3a32c" stroke="#a55a12" strokeWidth="0.600" />
                            <path d="M8 1.500L9 0L11 1.500L10 3Z" fill="#d8564c" />
                        </svg>
                    </button>
                    <div className="flex h-full flex-1 items-center justify-end gap-3 pr-7">
                        <span className="text-[12px]">100%</span>
                        <input
                            type="range"
                            aria-label="Zoomstufe"
                            value={zoom}
                            onChange={({ target }) => setZoom(target.value)}
                            className="h-1 w-[101px] appearance-none rounded-full border border-[#777] bg-[#b5b5b5] [&::-webkit-slider-thumb]:size-[11px] [&::-webkit-slider-thumb]:appearance-none [&::-webkit-slider-thumb]:rounded-full [&::-webkit-slider-thumb]:border [&::-webkit-slider-thumb]:border-[#777] [&::-webkit-slider-thumb]:bg-[radial-gradient(#555_20%,#eee_30%)]"
                        />
                    </div>
                </div>
            </div>
        </footer>
    )
}

export default function App() {
    return (
        <div className="flex min-h-screen flex-col bg-[#ebebeb] font-['Liberation_Sans',Arial,sans-serif]">
            <Toolbar />
            <TabBar />
            <Ribbon />
            <div className="flex flex-1">
                <div className="flex min-w-0 flex-1 flex-col">
                    <div className="flex h-[26px]">
                        <div className="w-[22px] shrink-0 pt-[3px] pl-[3px]">
                            <button aria-label="Tabstopp" className="flex h-[19px] w-[18px] items-center justify-center rounded-[5px] border-2 border-white bg-[#f0f0f0] shadow-[0_0_0_1px_#d0d0d0]">
                                <svg width="13" height="12" viewBox="0 0 13 12">
                                    <path d="M1.500 10V3.500H5" fill="none" stroke="#111" strokeWidth="1.500" />
                                    <path d="M4 0.500L7.500 3.500L4 6.500ZM8 7.500H13L10.500 11.500Z" fill="#111" />
                                </svg>
                            </button>
                        </div>
                        <div className="flex flex-1 justify-center pt-1">
                            <HorizontalRuler />
                        </div>
                    </div>
                    <div className="flex flex-1">
                        <div className="w-[22px] shrink-0">
                            <VerticalRuler />
                        </div>
                        <main className="flex flex-1 items-start justify-center bg-linear-to-b from-[#c0c4d0] to-[#9aa1ae] to-45% pt-[13px] shadow-[inset_0_2px_1px_#9298a5,inset_3px_0_1px_#858c9a,inset_-2px_0_1px_#858c9a]">
                            <article className="flex h-[842px] w-[595px] bg-white pt-[71px] pl-[70px] shadow-[0_0_0_2px_#8d939f,0_0_3px_2px_#8d939f]">
                                <span className="h-[14px] w-px bg-black" />
                            </article>
                        </main>
                    </div>
                </div>
                <ScrollBar />
            </div>
            <StatusBar />
        </div>
    )
}
